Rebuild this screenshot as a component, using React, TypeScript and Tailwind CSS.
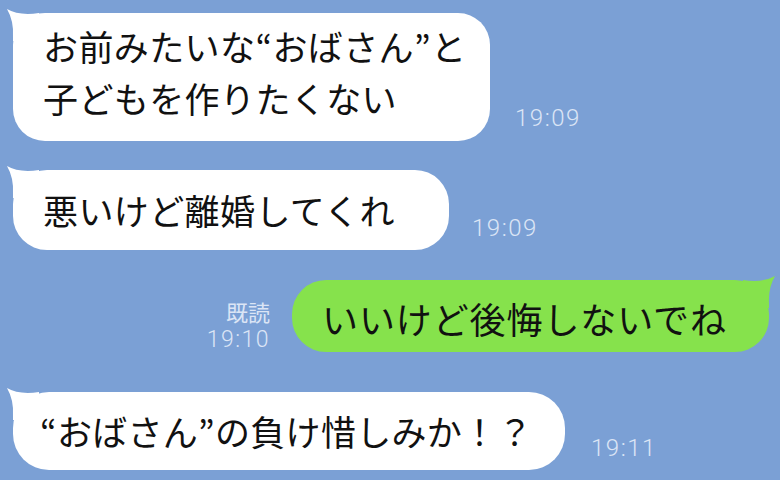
type Msg = {
  id: number;
  lines: string[];
  time: string;
};

const jp = { fontFamily: '"Noto Sans CJK JP", "Noto Sans", sans-serif' };
const num = { fontFamily: 'Roboto, "Liberation Sans", sans-serif' };

function TailLeft() {
  return (
    <svg className="absolute -left-[8px] -top-[6px]" width="40" height="40" viewBox="0 0 40 40">
      <path d="M2 2 Q 14 9 34 6 L 34 34 L 8 34 L 8 30 Q 9 14 2 2 Z" fill="#ffffff" />
    </svg>
  );
}

function TailRight() {
  return (
    <svg className="absolute -right-[8px] -top-[6px]" width="40" height="40" viewBox="0 0 40 40">
      <path d="M38 2 Q 26 9 6 6 L 6 34 L 32 34 L 32 30 Q 31 14 38 2 Z" fill="#86e24c" />
    </svg>
  );
}

function Time({ value, className }: { value: string; className: string }) {
  return (
    <span
      style={num}
      className={`text-[24px] font-light leading-none tracking-[1.5px] text-[#dbe5f5] ${className}`}
    >
      {value}
    </span>
  );
}

export default function App() {
  const first: Msg = { id: 1, lines: ["お前みたいな“おばさん”と", "子どもを作りたくない"], time: "19:09" };

  return (
    <div className="flex h-[480px] w-[780px] flex-col overflow-hidden bg-[#7ba0d5] pt-[13px] pl-[13px] pr-[11px]">
      <div className="flex items-end">
        <div
          style={jp}
          className="relative flex h-[128px] w-[477px] flex-col rounded-[32px] bg-white pl-[30px] pt-[7px] text-[35px] leading-[52px] tracking-[0.4px] text-[#111]"
        >
          <TailLeft />
          {first.lines.map((l) => (
            <span key={l} className="relative">{l}</span>
          ))}
        </div>
        <Time value={first.time} className="mb-[11px] ml-[25px]" />
      </div>

      <div className="mt-[29px] flex items-end">
        <div
          style={jp}
          className="relative flex h-[80px] w-[436px] items-center rounded-[34px] bg-white pl-[30px] text-[35px] tracking-[0.4px] text-[#111]"
        >
          <TailLeft />
          <span className="relative">悪いけど離婚してくれ</span>
        </div>
        <Time value="19:09" className="mb-[10px] ml-[23px]" />
      </div>

      <div className="mt-[30px] flex items-end justify-end">
        <div className="mb-[1px] mr-[22px] flex flex-col items-end text-[#dbe5f5]">
          <span style={jp} className="text-[22px] leading-[24px]">既読</span>
          <span style={num} className="mt-[5px] text-[23px] font-light leading-none tracking-[1.5px]">19:10</span>
        </div>
        <div
          style={jp}
          className="relative flex h-[72px] w-[477px] items-center rounded-[34px] bg-[#86e24c] pl-[30px] pt-[4px] text-[36px] tracking-[0.9px] text-[#111]"
        >
          <TailRight />
          <span className="relative">いいけど後悔しないでね</span>
        </div>
      </div>

      <div className="mt-[40px] flex items-end">
        <div
          style={jp}
          className="relative flex h-[78px] w-[552px] items-center rounded-[36px] bg-white pl-[27px] text-[35px] tracking-[0.3px] text-[#111]"
        >
          <TailLeft />
          <span className="relative">“おばさん”の負け惜しみか！？</span>
        </div>
        <Time value="19:11" className="mb-[10px] ml-[26px]" />
      </div>
    </div>
  );
}
